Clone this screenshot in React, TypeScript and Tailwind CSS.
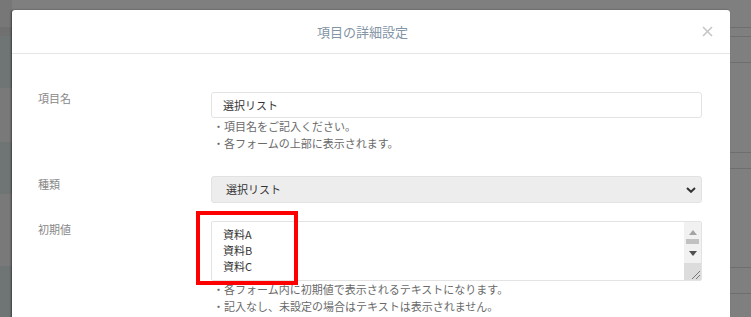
import React from 'react';

const jp = { fontFamily: '"Noto Sans CJK JP", "Noto Sans", sans-serif' };

const Label = ({ children }: { children: React.ReactNode }) => (
  <div className="text-[11px] leading-[16px] text-[#888]">{children}</div>
);

const Help = ({ lines }: { lines: string[] }) => (
  <div className="pl-[2px] text-[11px] leading-[17px] text-[#6a6a6a]">
    {lines.map((l) => (
      <div key={l}>・{l}</div>
    ))}
  </div>
);

const Scrollbar = () => (
  <div className="flex w-[17px] flex-col items-center bg-[#f1f1f1]">
    <svg width="8" height="5" viewBox="0 0 8 5" className="mt-[8px]">
      <polygon points="4,0 8,5 0,5" fill="#a3a3a3" />
    </svg>
    <div className="mt-[4px] h-[5px] w-[13px] bg-[#c1c1c1]" />
    <svg width="8" height="5" viewBox="0 0 8 5" className="mt-[7px]">
      <polygon points="0,0 8,0 4,5" fill="#505050" />
    </svg>
    <div className="mt-auto flex h-[17px] w-full items-end justify-end bg-[#dcdcdc] p-[1px]">
      <svg width="9" height="9" viewBox="0 0 9 9">
        <line x1="1" y1="9" x2="9" y2="1" stroke="#777" strokeWidth="1" />
        <line x1="5" y1="9" x2="9" y2="5" stroke="#777" strokeWidth="1" />
      </svg>
    </div>
  </div>
);

export default function App() {
  return (
    <div style={jp} className="grid h-[317px] w-[751px] grid-cols-[12px_718px_21px] overflow-hidden bg-[#7f7f7f]">
      {/* page behind the overlay, left strip */}
      <div className="flex flex-col">
        <div className="h-[27px] bg-[#777]" />
        <div className="h-[9px] bg-[#707070]" />
        <div className="h-[52px] bg-[#6f7474]" />
        <div className="h-[54px] bg-[#797979]" />
        <div className="h-[52px] bg-[#6f7474]" />
        <div className="h-[72px] bg-[#797979]" />
        <div className="flex-1 bg-[#6f7474]" />
      </div>

      {/* modal */}
      <div className="pt-[10px]">
        <div className="h-[320px] rounded-t-[3px] bg-white shadow-[-1px_0_2px_rgba(0,0,0,0.45)]">
          <div className="grid h-[44px] grid-cols-[1fr_auto_1fr] items-center border-b border-[#e6e6e6]">
            <div />
            <div className="mr-[17px] text-[13px] text-[#8394a5]">項目の詳細設定</div>
            <div className="flex justify-end pr-[17px]">
              <svg width="11" height="11" viewBox="0 0 11 11">
                <line x1="1" y1="1" x2="10" y2="10" stroke="#c6c6c6" strokeWidth="1.6" />
                <line x1="10" y1="1" x2="1" y2="10" stroke="#c6c6c6" strokeWidth="1.6" />
              </svg>
            </div>
          </div>

          <div className="grid grid-cols-[173px_491px] pl-[26px] pt-[38px]">
            <div className="-mt-[2px]">
              <Label>項目名</Label>
            </div>
            <div>
              <div className="flex h-[26px] items-center rounded-[3px] border border-[#e3e3e3] px-[11px] text-[11px] text-[#333]">
                選択リスト
              </div>
              <Help lines={['項目名をご記入ください。', '各フォームの上部に表示されます。']} />
            </div>

            <div className="mt-[24px]">
              <Label>種類</Label>
            </div>
            <div className="mt-[24px] flex h-[27px] items-center justify-between rounded-[3px] border border-[#e2e2e2] bg-[#ededed] pl-[14px] pr-[5px] text-[11px] text-[#333]">
              <span>選択リスト</span>
              <svg width="10" height="6" viewBox="0 0 10 6">
                <polyline points="1,1 5,4.8 9,1" fill="none" stroke="#333" strokeWidth="2" />
              </svg>
            </div>

            <div className="mt-[18px]">
              <Label>初期値</Label>
            </div>
            <div className="relative mt-[18px]">
              <div className="flex h-[60px] rounded-[2px] border border-[#e3e3e3]">
                <div className="flex-1 pl-[11px] pt-[4px] text-[11px] leading-[16px] text-[#333]">
                  <div>資料A</div>
                  <div>資料B</div>
                  <div>資料C</div>
                </div>
                <Scrollbar />
              </div>
              <Help lines={['各フォーム内に初期値で表示されるテキストになります。', '記入なし、未設定の場合はテキストは表示されません。']} />
              <div className="absolute left-[-15px] top-[-10px] h-[74px] w-[102px] border-[4px] border-[#ff0000]" />
            </div>
          </div>
        </div>
      </div>

      {/* page behind the overlay, right strip */}
      <div className="flex flex-col">
        <div className="h-[27px]" />
        <div className="h-[9px] border-t border-[#6e6e6e]" />
        <div className="h-[26px] border-t border-[#6e6e6e]" />
        <div className="h-[90px] border-t border-[#6e6e6e]" />
        <div className="h-[16px] border-t border-[#6e6e6e]" />
        <div className="h-[99px] border-t border-[#6e6e6e]" />
        <div className="h-[26px] border-t border-[#6e6e6e]" />
        <div className="flex-1 border-t border-[#6e6e6e]" />
      </div>
    </div>
  );
}
